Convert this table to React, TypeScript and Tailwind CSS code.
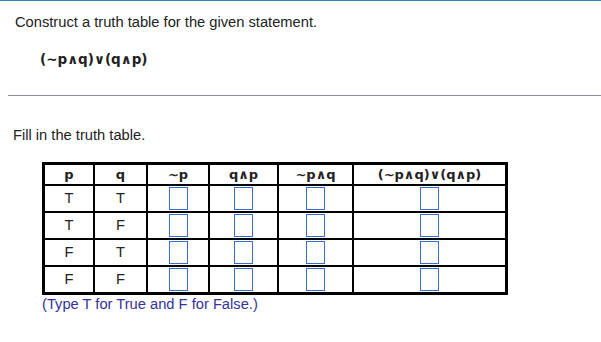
import { Fragment } from "react";

type Row = { p: string; q: string };

const rows: Row[] = [
  { p: "T", q: "T" },
  { p: "T", q: "F" },
  { p: "F", q: "T" },
  { p: "F", q: "F" },
];

const headers = ["p", "q", "~p", "q∧p", "~p∧q", "(~p∧q)∨(q∧p)"];

function AnswerBox() {
  return (
    <input
      type="text"
      maxLength={1}
      className="w-[19px] h-[23px] border border-[#3a6bd0] bg-white outline-none text-center text-[14px]"
    />
  );
}

function App() {
  return (
    <div className="w-[601px] h-[342px] bg-white border-t border-[#2f86b3] font-['Liberation_Sans',Arial,sans-serif] text-[14.7px] text-[#222] overflow-hidden">
      <p className="ml-[15px] mt-[13px] leading-4">
        Construct a truth table for the given statement.
      </p>
      <p className="ml-[40px] mt-[21px] leading-4 font-bold text-[13.5px] font-['DejaVu_Sans',Verdana,sans-serif]">
        (~p∧q)∨(q∧p)
      </p>

      <div className="ml-[8px] mt-[28px] h-px bg-[#8a8e99]" />

      <p className="ml-[13px] mt-[31px] leading-4">Fill in the truth table.</p>

      <div className="ml-[42px] mt-[19px] w-[466px] border-[3px] border-black bg-black grid grid-cols-[48px_51px_60px_67px_73px_151px] gap-[2px]">
        {headers.map((h) => (
          <div
            key={h}
            className="bg-white h-[19px] flex items-center justify-center font-bold text-[13px] font-['DejaVu_Sans',Verdana,sans-serif]"
          >
            {h}
          </div>
        ))}
        {rows.map((r, i) => (
          <Fragment key={i}>
            <div className="bg-white h-[25px] flex items-center justify-center">{r.p}</div>
            <div className="bg-white h-[25px] flex items-center justify-center">{r.q}</div>
            {[0, 1, 2, 3].map((c) => (
              <div key={c} className="bg-white h-[25px] flex items-center justify-center">
                <AnswerBox />
              </div>
            ))}
          </Fragment>
        ))}
      </div>

      <p className="ml-[42px] mt-[1px] leading-4 text-[#333399]">
        (Type T for True and F for False.)
      </p>
    </div>
  );
}

export default App;
